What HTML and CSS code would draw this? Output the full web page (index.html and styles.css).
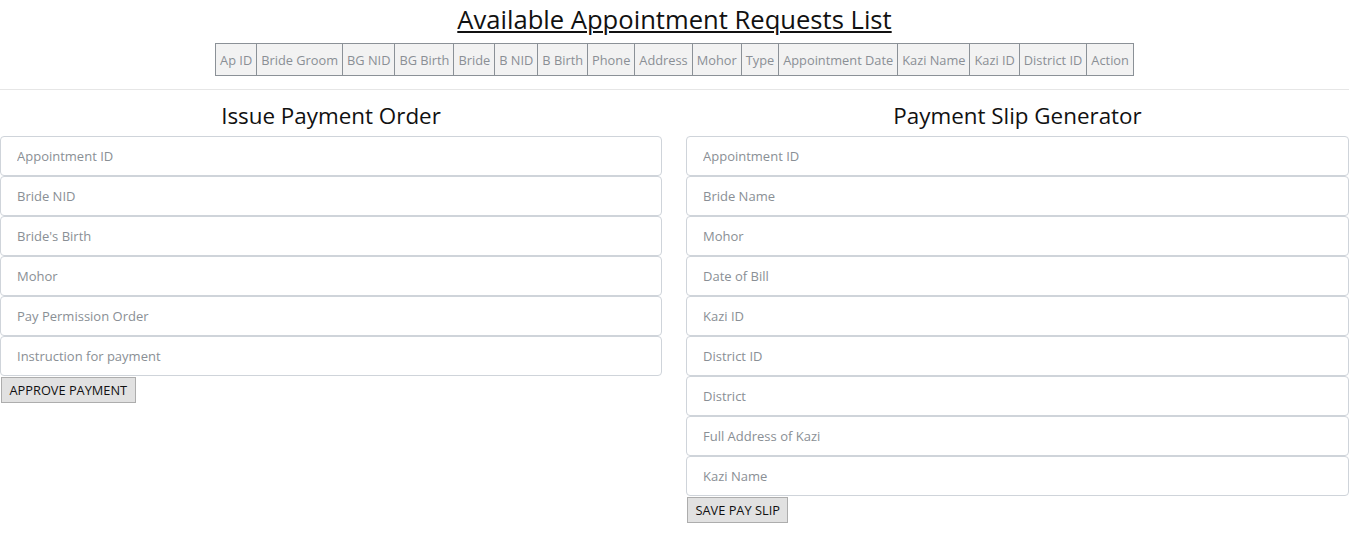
FILE: index.html
```html
<!DOCTYPE html>
<html>
<head>
<meta charset="utf-8">
<title>Appointments</title>
<link rel="stylesheet" href="styles.css">
</head>
<body>
<section class="requests">
  <h1 class="title">Available Appointment Requests List</h1>
  <table class="req-table">
    <thead>
      <tr>
        <th>Ap ID</th><th>Bride Groom</th><th>BG NID</th><th>BG Birth</th><th>Bride</th><th>B NID</th><th>B Birth</th><th>Phone</th><th>Address</th><th>Mohor</th><th>Type</th><th>Appointment Date</th><th>Kazi Name</th><th>Kazi ID</th><th>District ID</th><th>Action</th>
      </tr>
    </thead>
  </table>
</section>
<hr class="divider">
<main class="forms">
  <form class="panel">
    <h2 class="panel-title">Issue Payment Order</h2>
    <input class="field" type="text" placeholder="Appointment ID">
    <input class="field" type="text" placeholder="Bride NID">
    <input class="field" type="text" placeholder="Bride's Birth">
    <input class="field" type="text" placeholder="Mohor">
    <input class="field" type="text" placeholder="Pay Permission Order">
    <input class="field" type="text" placeholder="Instruction for payment">
    <div class="actions"><button class="btn" type="button">APPROVE PAYMENT</button></div>
  </form>
  <form class="panel">
    <h2 class="panel-title">Payment Slip Generator</h2>
    <input class="field" type="text" placeholder="Appointment ID">
    <input class="field" type="text" placeholder="Bride Name">
    <input class="field" type="text" placeholder="Mohor">
    <input class="field" type="text" placeholder="Date of Bill">
    <input class="field" type="text" placeholder="Kazi ID">
    <input class="field" type="text" placeholder="District ID">
    <input class="field" type="text" placeholder="District">
    <input class="field" type="text" placeholder="Full Address of Kazi">
    <input class="field" type="text" placeholder="Kazi Name">
    <div class="actions"><button class="btn" type="button">SAVE PAY SLIP</button></div>
  </form>
</main>
</body>
</html>
```

FILE: styles.css
```css
* { box-sizing: border-box; }

body {
  margin: 0;
  font-family: "Open Sans", "Liberation Sans", sans-serif;
  color: #111;
  background: #fff;
}

.requests {
  text-align: center;
  padding-top: 2px;
}

.title {
  margin: 0;
  font-size: 25.6px;
  font-weight: 400;
  line-height: 36px;
  text-decoration: underline;
  text-decoration-thickness: 2px;
  text-underline-offset: 2px;
}

.req-table {
  margin: 5px auto 0;
  border-collapse: collapse;
  background: #f2f2f2;
}

.req-table th {
  border: 1px solid #8b9197;
  font-weight: 400;
  font-size: 12.8px;
  color: #8a8f95;
  padding: 0 4px;
  height: 32px;
  white-space: nowrap;
}

.divider {
  margin: 13px 0 0;
  border: 0;
  border-top: 1px solid #e6e6e6;
}

.forms {
  display: grid;
  grid-template-columns: 662px 663px;
  column-gap: 24px;
  padding-top: 11px;
}

.panel {
  display: flex;
  flex-direction: column;
  margin: 0;
}

.panel-title {
  margin: 0 0 5px;
  font-size: 22.4px;
  font-weight: 400;
  line-height: 30px;
  text-align: center;
  color: #111;
}

.field {
  display: block;
  width: 100%;
  height: 40px;
  margin: 0;
  padding: 0 16px;
  border: 1px solid #cfd4da;
  border-radius: 4px;
  font-family: "Open Sans", "Liberation Sans", sans-serif;
  font-size: 13px;
  color: #333;
  background: #fff;
}

.field::placeholder {
  color: #8a8f95;
}

.actions {
  padding-top: 1px;
  padding-left: 1px;
}

.btn {
  font-family: "Open Sans", "Liberation Sans", sans-serif;
  font-size: 12.8px;
  color: #111;
  background: #e1e1e1;
  border: 1px solid #adadad;
  border-radius: 0;
  height: 26px;
  padding: 0 7.5px;
}
```
